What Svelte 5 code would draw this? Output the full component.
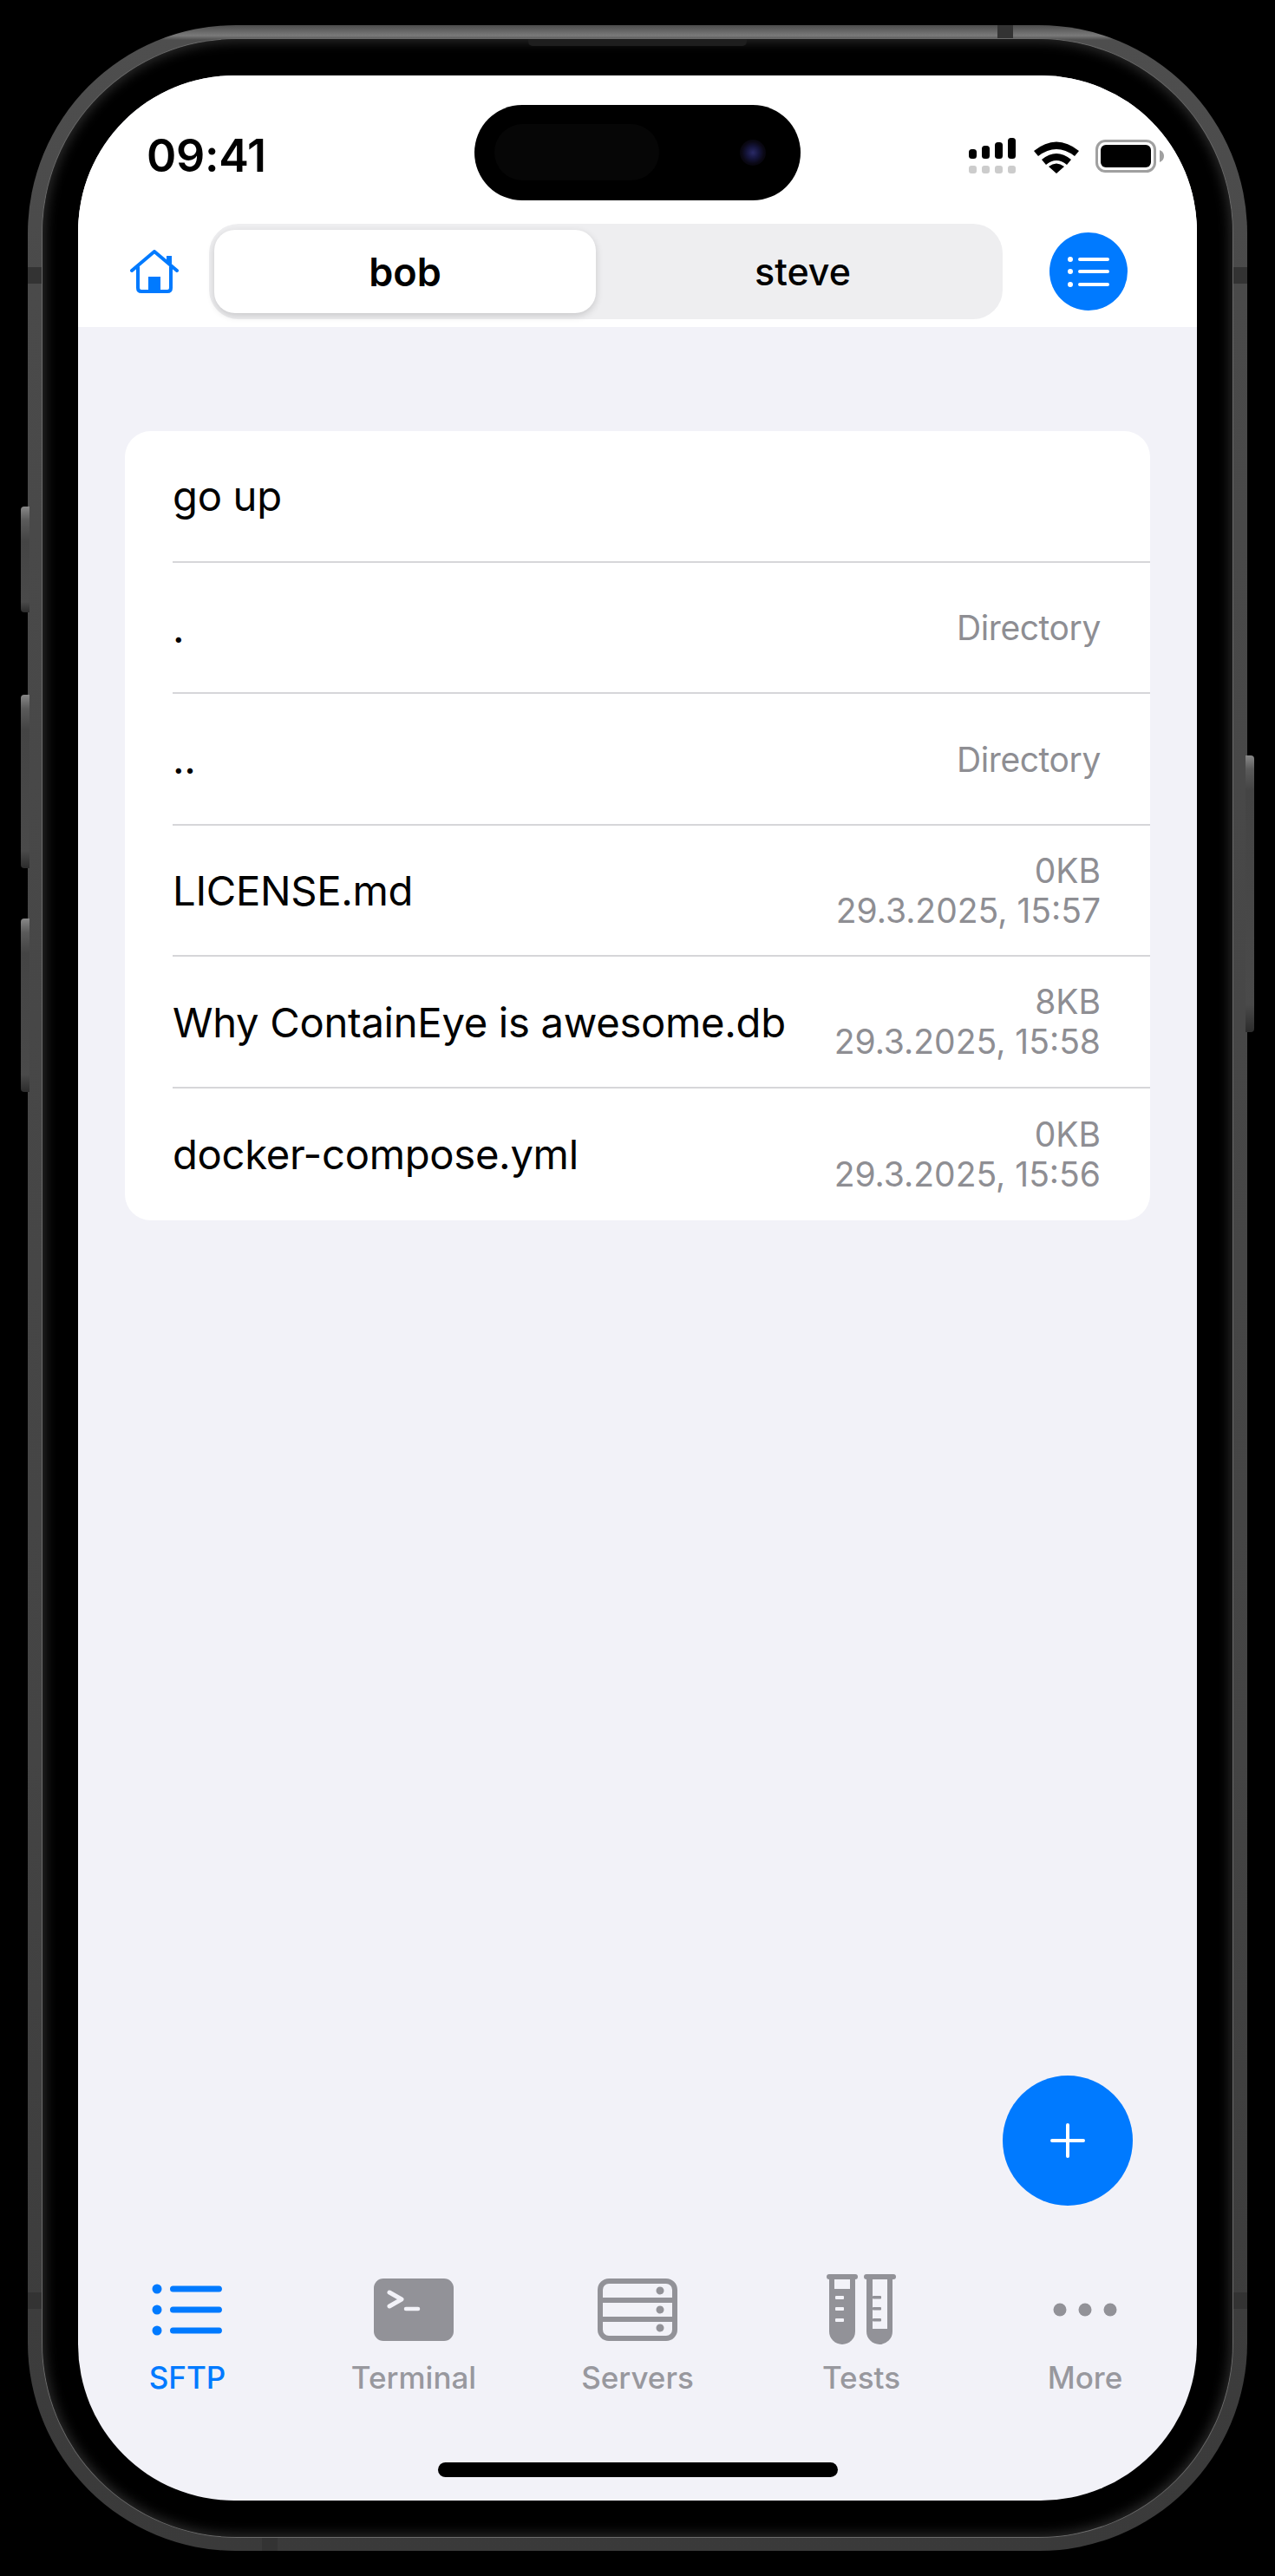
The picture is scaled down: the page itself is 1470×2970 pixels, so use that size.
<script lang="ts">
  const files = [
    { name: 'go up' },
    { name: '.', meta: ['Directory'] },
    { name: '..', meta: ['Directory'] },
    { name: 'LICENSE.md', meta: ['0KB', '29.3.2025, 15:57'] },
    { name: 'Why ContainEye is awesome.db', meta: ['8KB', '29.3.2025, 15:58'] },
    { name: 'docker-compose.yml', meta: ['0KB', '29.3.2025, 15:56'] },
  ];

  // darker antenna breaks in the metal frame
  const bands = ['band-top', 'band-left-a', 'band-right-a', 'band-left-b', 'band-right-b', 'band-bottom'];
</script>

<div class="device">
  <span class="btn action"></span>
  <span class="btn vol-up"></span>
  <span class="btn vol-down"></span>
  <span class="btn power"></span>
  {#each bands as band}
    <span class="band {band}"></span>
  {/each}

  <div class="bezel">
    <span class="speaker"></span>
    <div class="screen">
      <!-- Dynamic island sits over the status bar -->
      <div class="island">
        <span class="face-id"></span>
        <span class="camera"></span>
      </div>

      <header class="top-bar">
        <div class="status">
          <span class="time">09:41</span>
          <div class="status-icons">
            <svg width="54" height="42" viewBox="0 0 54 42">
              <rect x="0" y="13" width="9" height="11" rx="3.5" />
              <rect x="15" y="9" width="9" height="15" rx="3.5" />
              <rect x="30" y="5" width="9" height="19" rx="3.5" />
              <rect x="45" y="0" width="9" height="24" rx="3.5" />
              <g fill="#cccccc">
                <rect x="0" y="32" width="9" height="9" rx="3" />
                <rect x="15" y="32" width="9" height="9" rx="3" />
                <rect x="30" y="32" width="9" height="9" rx="3" />
                <rect x="45" y="32" width="9" height="9" rx="3" />
              </g>
            </svg>
            <svg class="wifi" width="52" height="40" viewBox="0 0 52 40">
              <path d="M0 14 Q26 -7 52 14 L47 20 Q26 4 5 20 Z" />
              <path d="M9 24 Q26 10 43 24 L38 30 Q26 20 14 30 Z" />
              <path d="M17 32 Q26 25 35 32 L26 40 Z" />
            </svg>
            <svg class="battery" width="79" height="38" viewBox="0 0 79 38">
              <rect x="1.5" y="1.5" width="67" height="35" rx="10" fill="none" stroke="#a0a0a0" stroke-width="3" />
              <rect x="6" y="6" width="58" height="26" rx="6" />
              <path d="M74 12 Q79 14 79 19 Q79 24 74 26 Z" fill="#a0a0a0" />
            </svg>
          </div>
        </div>

        <div class="nav">
          <svg class="home" width="56" height="50" viewBox="0 0 56 50" fill="none" stroke="#007aff" stroke-width="4" stroke-linecap="round" stroke-linejoin="round">
            <path d="M2 24 L28 2 L54 24" />
            <path d="M45 16 V7" stroke-width="6" stroke-linecap="butt" />
            <path d="M9 20 V44 Q9 48 13 48 H43 Q47 48 47 44 V20" />
            <rect x="21" y="31" width="14" height="17" fill="#007aff" stroke="none" />
          </svg>

          <div class="segments">
            <div class="segment active">bob</div>
            <div class="segment">steve</div>
          </div>

          <div class="menu-btn">
            <svg width="48" height="36" viewBox="0 0 48 36" fill="none" stroke="#fff" stroke-width="4" stroke-linecap="round">
              <path d="M14 4 H46 M14 18 H46 M14 33 H46" />
              <g fill="#fff" stroke="none">
                <circle cx="3" cy="4" r="3" />
                <circle cx="3" cy="18" r="3" />
                <circle cx="3" cy="33" r="3" />
              </g>
            </svg>
          </div>
        </div>
      </header>

      <main class="content">
        <section class="card">
          {#each files as file}
            <div class="row">
              <span class="name">{file.name}</span>
              {#if file.meta}
                <div class="meta" class:single={file.meta.length === 1}>
                  {#each file.meta as line}
                    <span>{line}</span>
                  {/each}
                </div>
              {/if}
            </div>
          {/each}
        </section>

        <div class="fab">
          <svg width="42" height="42" viewBox="0 0 42 42" stroke="#fff" stroke-width="4" stroke-linecap="round">
            <path d="M21 3 V39 M3 21 H39" />
          </svg>
        </div>
      </main>

      <nav class="tabs">
        <div class="tab current">
          <svg width="82" height="82" viewBox="0 0 82 82" fill="none" stroke="#007aff" stroke-width="7" stroke-linecap="round">
            <path d="M24.5 17 H77.5 M24.5 41 H77.5 M24.5 65 H77.5" />
            <g fill="#007aff" stroke="none">
              <circle cx="6" cy="17" r="5.5" />
              <circle cx="6" cy="41" r="5.5" />
              <circle cx="6" cy="65" r="5.5" />
            </g>
          </svg>
          <span>SFTP</span>
        </div>

        <div class="tab">
          <svg width="92" height="82" viewBox="0 0 92 82">
            <rect x="0" y="5" width="92" height="72" rx="11" fill="#929298" />
            <path d="M18 21 L32 29 L18 37" fill="none" stroke="#f2f2f8" stroke-width="5" stroke-linecap="round" stroke-linejoin="round" />
            <path d="M37 40 H51" fill="none" stroke="#f2f2f8" stroke-width="4.5" stroke-linecap="round" />
          </svg>
          <span>Terminal</span>
        </div>

        <div class="tab">
          <svg width="92" height="82" viewBox="0 0 92 82" fill="none" stroke="#929298" stroke-width="6">
            <rect x="3" y="8" width="86" height="66" rx="10" />
            <path d="M3 30 H89 M3 52 H89" />
            <g fill="#929298" stroke="none">
              <circle cx="72" cy="19" r="4.5" />
              <circle cx="72" cy="41" r="4.5" />
              <circle cx="72" cy="62" r="4.5" />
            </g>
          </svg>
          <span>Servers</span>
        </div>

        <div class="tab">
          <svg width="82" height="82" viewBox="0 0 82 82" fill="#929298">
            <rect x="1" y="0" width="36" height="6" rx="3" />
            <path d="M4 4 H34 V66 A15 15 0 0 1 4 66 Z" />
            <rect x="10" y="6" width="18" height="11" fill="#f2f2f8" />
            <g fill="#f2f2f8">
              <rect x="11" y="25" width="10" height="4" rx="1" />
              <rect x="11" y="38" width="10" height="4" rx="1" />
              <rect x="11" y="51" width="10" height="4" rx="1" />
            </g>
            <rect x="44" y="0" width="37" height="6" rx="3" />
            <path fill-rule="evenodd" d="M47 4 H77 V66 A15 15 0 0 1 47 66 Z M54 6 V63 H71 V6 Z" />
            <rect x="54" y="25" width="10" height="3.5" rx="1" />
            <rect x="54" y="38" width="10" height="3.5" rx="1" />
            <rect x="54" y="51" width="10" height="3.5" rx="1" />
          </svg>
          <span>Tests</span>
        </div>

        <div class="tab">
          <svg width="82" height="82" viewBox="0 0 82 82" fill="#929298">
            <circle cx="12" cy="41" r="7.5" />
            <circle cx="41" cy="41" r="7.5" />
            <circle cx="70" cy="41" r="7.5" />
          </svg>
          <span>More</span>
        </div>
      </nav>

      <div class="home-indicator"></div>
    </div>
  </div>
</div>

<style>
  :global(body) {
    margin: 0;
    background: #000;
  }

  .device {
    position: relative;
    box-sizing: border-box;
    width: 1406px;
    height: 2912px;
    margin: 29px 32px;
    padding: 16px 17px;
    border-radius: 240px;
    background: linear-gradient(180deg, #4c4c4c 0, #7a7a7a 12px, #4e4e4e 17px, #4a4a4a 300px, #444 2000px, #3a3a3a 100%);
    font-family: Inter, 'Liberation Sans', sans-serif;
  }

  .btn {
    position: absolute;
    left: -8px;
    width: 10px;
    border-radius: 4px 0 0 4px;
    background: linear-gradient(180deg, #888 0, #5a5a5a 16px, #444 40px, #4a4a4a 90%, #2c2c2c 100%);
  }

  .action { top: 555px; height: 122px; }
  .vol-up { top: 772px; height: 200px; }
  .vol-down { top: 1030px; height: 200px; }

  .power {
    left: auto;
    right: -8px;
    top: 842px;
    height: 319px;
    border-radius: 0 4px 4px 0;
  }

  .band {
    position: absolute;
    background: #333;
  }

  .band-top { top: 0; left: 1118px; width: 18px; height: 16px; }
  .band-bottom { bottom: 0; left: 270px; width: 18px; height: 16px; }
  .band-left-a { left: 0; top: 279px; width: 17px; height: 19px; }
  .band-right-a { right: 0; top: 279px; width: 17px; height: 19px; }
  .band-left-b { left: 0; top: 2614px; width: 17px; height: 19px; }
  .band-right-b { right: 0; top: 2614px; width: 17px; height: 19px; }

  .bezel {
    position: relative;
    box-sizing: border-box;
    height: 100%;
    padding: 42px 41px;
    border-radius: 224px;
    background: #000;
    box-shadow: 0 0 0 1px #6a6a6a, inset 0 0 14px 3px rgba(80, 80, 80, 0.55);
  }

  .speaker {
    position: absolute;
    top: 0;
    left: 560px;
    width: 252px;
    height: 8px;
    border-radius: 0 0 5px 5px;
    background: #1e1e1e;
  }

  .screen {
    position: relative;
    display: flex;
    flex-direction: column;
    height: 100%;
    overflow: hidden;
    border-radius: 180px;
    background: #f2f2f8;
  }

  .island {
    position: absolute;
    top: 34px;
    left: 457px;
    width: 376px;
    height: 110px;
    border-radius: 55px;
    background: #000;
  }

  .face-id {
    position: absolute;
    top: 22px;
    left: 23px;
    width: 190px;
    height: 65px;
    border-radius: 33px;
    background: #060606;
  }

  .camera {
    position: absolute;
    top: 40px;
    left: 306px;
    width: 30px;
    height: 30px;
    border-radius: 50%;
    background: radial-gradient(circle, #2a2a66 0, #14143a 35%, #0a0814 60%, #000 100%);
  }

  .top-bar {
    height: 290px;
    box-sizing: border-box;
    background: #fff;
  }

  .status {
    display: flex;
    justify-content: space-between;
    align-items: flex-start;
    height: 130px;
    padding: 62px 38px 0 79px;
    box-sizing: border-box;
  }

  .time {
    font-size: 52px;
    font-weight: 600;
    line-height: 62px;
    color: #000;
    letter-spacing: -0.3px;
  }

  .status-icons {
    display: flex;
    align-items: flex-start;
    gap: 21px;
    margin-top: 10px;
  }

  .status-icons svg { display: block; fill: #000; }
  .wifi { margin-top: 1px; }
  .battery { margin-top: 2px; margin-left: -2px; }

  .nav {
    display: flex;
    align-items: center;
    padding: 41px 80px 0 60px;
  }

  .home { flex: none; }

  .segments {
    display: flex;
    flex: none;
    box-sizing: border-box;
    width: 915px;
    height: 110px;
    margin-left: 35px;
    padding: 7px 6px;
    border-radius: 34px;
    background: #eeeef0;
  }

  .segment {
    display: flex;
    flex: 1;
    align-items: center;
    justify-content: center;
    padding-left: 14px;
    font-size: 43px;
    font-weight: 500;
    color: #000;
  }

  .segment.active {
    flex: none;
    width: 440px;
    padding-left: 0;
    border-radius: 24px;
    background: #fff;
    font-size: 45px;
    font-weight: 600;
    box-shadow: 0 3px 8px rgba(0, 0, 0, 0.16);
  }

  .menu-btn {
    display: flex;
    align-items: center;
    justify-content: center;
    flex: none;
    width: 90px;
    height: 90px;
    margin-left: 54px;
    border-radius: 50%;
    background: #007aff;
  }

  .content {
    position: relative;
    flex: 1;
    padding: 120px 54px 0;
  }

  .card {
    overflow: hidden;
    border-radius: 30px;
    background: #fff;
  }

  .row {
    display: flex;
    align-items: center;
    justify-content: space-between;
    box-sizing: border-box;
    height: 151.6px;
    margin-left: 55px;
    padding-right: 57px;
    border-bottom: 2px solid #d6d6d9;
  }

  .row:last-child { border-bottom: none; }

  .name {
    font-size: 47.2px;
    color: #000;
    letter-spacing: -0.3px;
  }

  .meta {
    display: flex;
    flex-direction: column;
    align-items: flex-end;
    font-size: 39px;
    line-height: 46px;
    color: #8e8e93;
  }

  .meta.single {
    padding-top: 2px;
    letter-spacing: -0.4px;
  }

  .fab {
    position: absolute;
    right: 74px;
    bottom: 54px;
    display: flex;
    align-items: center;
    justify-content: center;
    width: 150px;
    height: 150px;
    border-radius: 50%;
    background: #007aff;
  }

  .tabs {
    display: grid;
    grid-template-columns: repeat(5, 1fr);
    height: 286px;
    padding-top: 25px;
    box-sizing: border-box;
  }

  .tab {
    display: flex;
    flex-direction: column;
    align-items: center;
    gap: 17px;
    font-size: 35px;
    font-weight: 500;
    color: #98989e;
    line-height: 40px;
  }

  .tab svg { display: block; }
  .tab.current { color: #007aff; margin-left: -6px; }

  .home-indicator {
    position: absolute;
    left: 415px;
    bottom: 27px;
    width: 461px;
    height: 17px;
    border-radius: 9px;
    background: #000;
  }
</style>
